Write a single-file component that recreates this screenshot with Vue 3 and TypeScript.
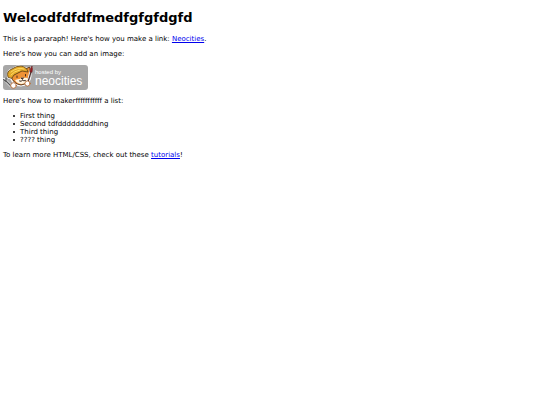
<script setup lang="ts">
const items: string[] = ['First thing', 'Second tdfddddddddhing', 'Third thing', '???? thing']
</script>

<template>
  <main class="page">
    <h1>Welcodfdfdfmedfgfgfdgfd</h1>
    <p>This is a pararaph! Here's how you make a link: <a href="#neocities">Neocities</a>.</p>
    <p>Here's how you can add an image:</p>
    <p>
      <svg class="badge" viewBox="0 0 85 25" role="img" aria-label="hosted by neocities">
        <rect width="85" height="25" rx="3" fill="#a7a7a7" />
        <g stroke-linejoin="round" stroke-linecap="round">
          <path d="M1 14 8 21" fill="none" stroke="#eee" stroke-width="2.5" />
          <path d="M3 16 8 21M.5 14.5 3 16.5 3 13" fill="none" stroke="#555" stroke-width="1.2" />
          <path d="M5 8Q5 4 9 4q4-4 9-3l6 2 3-1 1 9q-1 9-10 10-8 0-10-7l-3-1Z" fill="#fff" stroke="#fff" stroke-width="1" />
          <path d="m8 11 14-7 5-2v9q-1 8-9 9-8-1-10-9Z" fill="#ef9235" stroke="#4d2c17" stroke-width=".9" />
          <path d="M5 12q-2-6 4-8 4-3 9-3 6 1 7 6l-6-1-8 4-2 3Z" fill="#e3a929" stroke="#6a4815" stroke-width=".9" />
          <path d="M8 7q6-5 13-3M8 10q3-4 9-5" fill="none" stroke="#ffdc66" stroke-width="1" />
          <path d="M12 15q3-1 5-1l2-2 2 1q3-1 4 1-1 4-6 5-5 0-7-4Z" fill="#fff4df" />
          <path d="M14 11v1.500M22.500 9.500v1.500M18.500 13h2l-1 1ZM16.500 16q2 1 3-1 1 1.500 3 .500" fill="#35231a" stroke="#35231a" stroke-width=".9" />
          <path d="m28.500 3-3.500 14" stroke="#eee" stroke-width="2.500" />
          <path d="m28 7-3 10" stroke="#4c302d" stroke-width="1.200" />
          <path d="M27 7q-.500-3 2-6 1 3 0 6Z" fill="#9c1c20" stroke="#5d1b1d" stroke-width=".6" />
          <circle cx="10.500" cy="20.500" r="2.800" fill="#fff" stroke="#b46c35" stroke-width=".9" />
          <circle cx="24.500" cy="18.500" r="2.600" fill="#fff" stroke="#b46c35" stroke-width=".9" />
        </g>
        <text class="small" x="32" y="9">hosted by</text>
        <text class="large" x="32" y="20">neocities</text>
      </svg>
    </p>
    <p>Here's how to makerfffffffffff a list:</p>
    <ul>
      <li v-for="item in items" :key="item">{{ item }}</li>
    </ul>
    <p>To learn more HTML/CSS, check out these <a href="#tutorials">tutorials</a>!</p>
  </main>
</template>

<style>
body {
  margin: 0;
  background: #fff;
}
</style>

<style scoped>
.page {
  padding: 9px 3px;
  color: #000;
  font: 7px/8px "DejaVu Sans", Verdana, sans-serif;
}
h1 {
  margin: 0 0 9px;
  font-size: 13px;
  line-height: 17px;
}
p {
  margin: 0 0 7px;
}
a {
  color: #00e;
}
.badge {
  display: block;
  width: 85px;
  height: 25px;
}
.small,
.large {
  fill: #fff;
  font-family: "Liberation Sans", Arial, sans-serif;
}
.small {
  font-size: 6px;
}
.large {
  font-size: 12px;
}
ul {
  margin: 0 0 7px;
  padding-left: 10px;
  list-style: none;
}
li {
  display: flex;
  align-items: center;
  gap: 5px;
}
li::before {
  width: 2px;
  height: 2px;
  border-radius: 50%;
  background: #000;
  content: "";
}
</style>
